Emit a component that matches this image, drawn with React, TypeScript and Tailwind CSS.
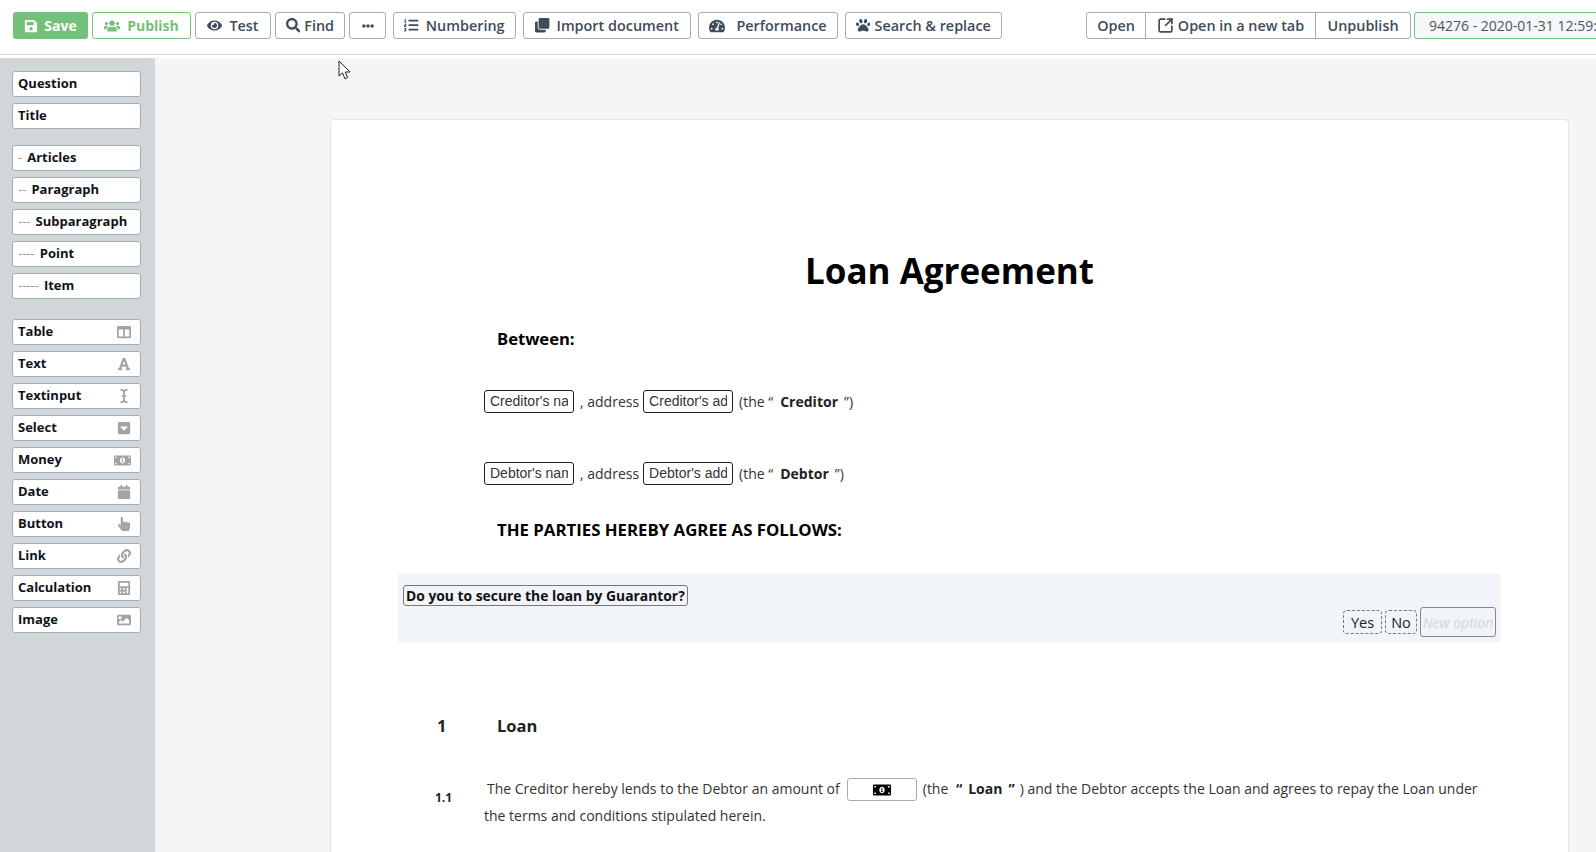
import type { ReactNode } from 'react';
import {
  FaCalculator,
  FaCalendar,
  FaCaretSquareDown,
  FaClone,
  FaColumns,
  FaEllipsisH,
  FaEye,
  FaFont,
  FaHandPointer,
  FaICursor,
  FaImage,
  FaLink,
  FaListOl,
  FaMoneyBillAlt,
  FaPaw,
  FaSave,
  FaSearch,
  FaTachometerAlt,
  FaUsers,
} from 'react-icons/fa';
import { SquareArrowOutUpRight } from 'lucide-react';

const ToolButton = ({ className, children }: { className: string; children: ReactNode }) => (
  <button className={`h-[27px] flex-none flex items-center justify-center rounded-[3px] border border-[#a3adb5] bg-white text-[14.4px] font-semibold text-[#3e4c59] ${className}`}>
    {children}
  </button>
);

const SideButton = ({ label, dashes, icon }: { label: string; dashes?: string; icon?: ReactNode }) => (
  <div className="h-[26px] flex items-center justify-between whitespace-nowrap rounded-[3px] border border-[#a3adb5] bg-white pl-[5px] pr-[9px] text-[13px] font-bold text-[#10131a]">
    <span className="flex items-center">
      {dashes && <span className="mr-[5px] font-normal text-[#9a9a9a]">{dashes}</span>}
      {label}
    </span>
    {icon && <span className="text-[#a3a3a3] text-[14px]">{icon}</span>}
  </div>
);

const FieldBox = ({ text }: { text: string }) => (
  <input
    readOnly
    value={text}
    className="h-[23px] w-[90px] flex-none rounded-[3px] border border-[#222] bg-white px-[5px] pb-[2px] font-['Liberation_Sans'] text-[14px] text-[#333] outline-none"
  />
);

const PartyRow = ({ name, address, role, className }: { name: string; address: string; role: string; className: string }) => (
  <div className={`pl-[153px] flex items-center h-[23px] ${className}`}>
    <FieldBox text={name} />
    <span className="ml-[6px] mr-[4px]">, address</span>
    <FieldBox text={address} />
    <span className="ml-[6px]">(the “</span>
    <b className="ml-[7px] mr-[6px] font-bold text-[#222]">{role}</b>
    <span>”)</span>
  </div>
);

const App = () => {
  return (
    <div className="relative h-screen w-full overflow-hidden bg-white font-['Open_Sans',sans-serif]">
      <header className="h-[55px] flex items-start border-b border-[#d5d9dc] pt-3 pl-[13px] whitespace-nowrap">
        <button className="h-[27px] w-[75px] flex-none mr-[4px] flex items-center justify-center gap-[6px] rounded-[3px] bg-[#74c17a] text-[14px] font-bold text-white">
          <FaSave /> Save
        </button>
        <button className="h-[27px] w-[99px] flex-none mr-[4px] flex items-center justify-center gap-[7px] rounded-[3px] border border-[#74c17a] bg-white text-[14px] font-bold text-[#74c17a]">
          <FaUsers className="text-[16px]" /> Publish
        </button>
        <ToolButton className="w-[76px] gap-[7px] mr-[4px]"><FaEye className="text-[15px]" /> Test</ToolButton>
        <ToolButton className="w-[70px] gap-[4px] mr-[4px]"><FaSearch /> Find</ToolButton>
        <ToolButton className="w-[37px] mr-[7px]"><FaEllipsisH className="text-[12px]" /></ToolButton>
        <ToolButton className="w-[123px] gap-[7px] mr-[7px]"><FaListOl /> Numbering</ToolButton>
        <ToolButton className="w-[168px] gap-[7px] mr-[7px]"><FaClone /> Import document</ToolButton>
        <ToolButton className="w-[140px] gap-[11px] mr-[7px]"><FaTachometerAlt className="text-[16px]" /> Performance</ToolButton>
        <ToolButton className="w-[157px] gap-[4px]"><FaPaw /> Search &amp; replace</ToolButton>
        <div className="ml-[84px] h-[27px] w-[325px] flex-none flex rounded-[3px] border border-[#a3adb5] text-[14.4px] font-semibold text-[#3e4c59]">
          <span className="w-[59px] flex items-center justify-center border-r border-[#a3adb5]">Open</span>
          <span className="w-[170px] flex items-center justify-center gap-[4px] border-r border-[#a3adb5]">
            <SquareArrowOutUpRight size={17} strokeWidth={2.4} /> Open in a new tab
          </span>
          <span className="flex-1 flex items-center justify-center">Unpublish</span>
        </div>
        <div className="ml-[3px] h-[27px] flex-none w-[240px] flex items-center rounded-[3px] border border-[#74c17a] bg-[#f5f7f8] pl-[14px] text-[14px] text-[#4a5560]">
          94276 - 2020-01-31 12:59:34
        </div>
      </header>

      <div className="flex h-[797px] pt-[3px]">
        <aside className="w-[155px] flex-none bg-[#d1d6d9] pt-[13px] pl-[12px] pr-[14px] flex flex-col">
          <div className="flex flex-col gap-[6px]">
            <SideButton label="Question" />
            <SideButton label="Title" />
          </div>
          <div className="mt-[16px] flex flex-col gap-[6px]">
            <SideButton label="Articles" dashes="-" />
            <SideButton label="Paragraph" dashes="--" />
            <SideButton label="Subparagraph" dashes="---" />
            <SideButton label="Point" dashes="----" />
            <SideButton label="Item" dashes="-----" />
          </div>
          <div className="mt-[20px] flex flex-col gap-[6px]">
            <SideButton label="Table" icon={<FaColumns />} />
            <SideButton label="Text" icon={<FaFont />} />
            <SideButton label="Textinput" icon={<FaICursor />} />
            <SideButton label="Select" icon={<FaCaretSquareDown />} />
            <SideButton label="Money" icon={<FaMoneyBillAlt className="text-[17px]" />} />
            <SideButton label="Date" icon={<FaCalendar />} />
            <SideButton label="Button" icon={<FaHandPointer />} />
            <SideButton label="Link" icon={<FaLink />} />
            <SideButton label="Calculation" icon={<FaCalculator />} />
            <SideButton label="Image" icon={<FaImage />} />
          </div>
        </aside>

        <main className="flex-1 min-w-0 bg-[#f4f5f6] pl-[175px] pr-[27px] pt-[61px]">
          <div className="h-[900px] rounded-t-[4px] border border-[#e2e5e8] bg-white text-[14px] text-[#333]">
            <h1 className="mt-[126px] text-center text-[35px] leading-[50px] font-bold text-black">Loan Agreement</h1>

            <p className="mt-[31px] pl-[166px] text-[16.6px] leading-[24px] font-bold text-black">Between:</p>

            <PartyRow className="mt-[39px]" name="Creditor's name" address="Creditor's address" role="Creditor" />
            <PartyRow className="mt-[49px]" name="Debtor's name" address="Debtor's address" role="Debtor" />

            <p className="mt-[33px] pl-[166px] text-[16.8px] leading-[24px] font-bold text-black">THE PARTIES HEREBY AGREE AS FOLLOWS:</p>

            <section className="relative mt-[32px] mx-[67px] h-[68px] bg-[#f1f4f9] pt-[11px] pl-[5px]">
              <span className="inline-block h-[21px] rounded-[3px] border border-[#777] px-[2px] text-[13.85px] leading-[19px] font-bold text-[#111]">
                Do you to secure the loan by Guarantor?
              </span>
              <div className="absolute right-[5px] bottom-[5px] flex items-center gap-[3px]">
                <span className="h-[24px] w-[39px] rounded-[4px] border border-dashed border-[#777] text-center text-[14.5px] leading-[24px] text-[#222]">Yes</span>
                <span className="h-[24px] w-[32px] rounded-[4px] border border-dashed border-[#777] text-center text-[14.5px] leading-[24px] text-[#222]">No</span>
                <span className="h-[30px] w-[76px] rounded-[3px] border border-[#888] text-center text-[14px] leading-[29px] italic text-[#d4d4d4]">New option</span>
              </div>
            </section>

            <div className="mt-[72px] flex items-center h-[24px] text-[16.5px] font-bold text-[#222]">
              <span className="ml-[106px] w-[60px]">1</span>
              <span>Loan</span>
            </div>

            <div className="relative mt-[35px] pl-[153px] pr-[80px] leading-[27px]">
              <span className="absolute left-[104px] top-[11px] text-[12px] font-bold text-[#222]">1.1</span>
              <p>
                <span className="ml-[3px]">The Creditor hereby lends to the Debtor an amount of</span>
                <span className="ml-[7px] mr-[6px] inline-flex h-[23px] w-[70px] translate-y-[5px] items-center justify-center rounded-[3px] border border-[#a3adb5] bg-white text-black">
                  <FaMoneyBillAlt className="text-[18px]" />
                </span>
                (the <b className="ml-[4px] text-[#222]">“</b>
                <b className="mx-[6px] text-[#222]">Loan</b>
                <b className="mr-[5px] text-[#222]">”</b>) and the Debtor accepts the Loan and agrees to repay the Loan under the terms and conditions stipulated herein.
              </p>
            </div>
          </div>
        </main>
      </div>

      <svg className="absolute left-[338px] top-[60px]" width="14" height="21" viewBox="0 0 14 21">
        <path d="M1 1 L1 16 L4.5 12.8 L7 18.8 L9.6 17.6 L7.2 12 L12 12 Z" fill="#fff" stroke="#222" strokeWidth="1" />
      </svg>
    </div>
  );
};

export default App;
